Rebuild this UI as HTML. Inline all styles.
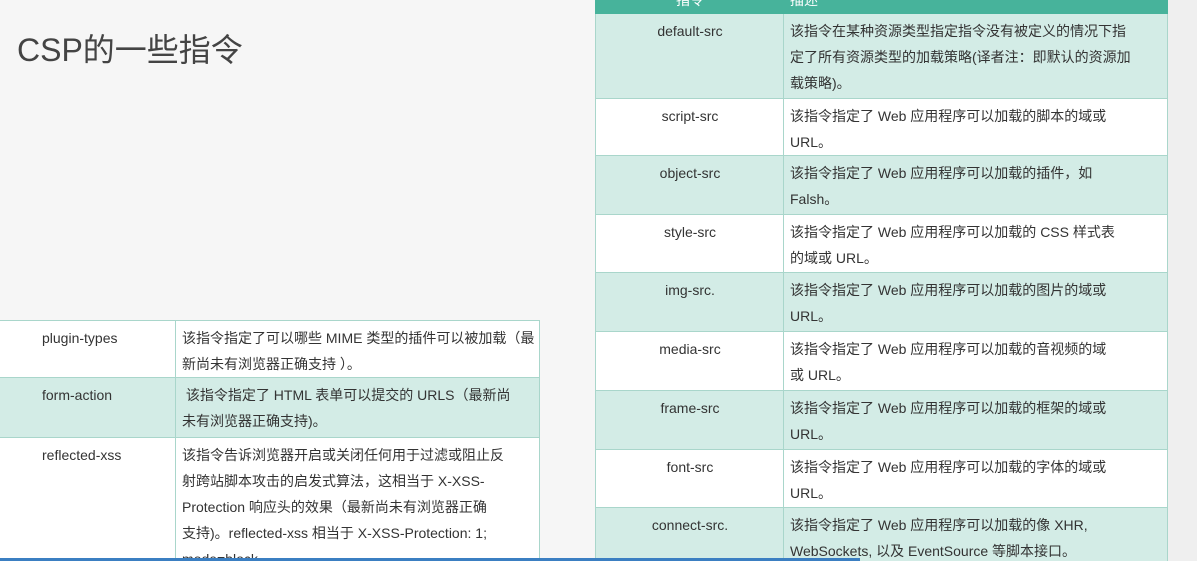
<!DOCTYPE html>
<html><head><meta charset="utf-8"><style>
*{margin:0;padding:0;box-sizing:border-box}
html,body{width:1197px;height:561px;overflow:hidden}
body{background:#f6f6f6;position:relative;font-family:"Liberation Sans","Noto Sans CJK SC",sans-serif;color:#333}
.title{position:absolute;left:17px;top:25px;font-size:32px;color:#444}
.row{position:absolute;border:1px solid #a9d6cb;border-top:none;font-size:14px;line-height:26px;overflow:hidden}
.t{background:#d3ece6}.w{background:#fff}
.row .k,.row .v{position:absolute;top:4px}
.row .dv{position:absolute;top:0;bottom:0;width:1px;background:#a9d6cb}
.R{left:595px;width:573px}
.R .k{left:0;width:188px;text-align:center}
.R .dv{left:187px}
.R .v{left:194px;width:372px}
.L{left:-2px;width:542px}
.L .k{left:43px}
.L .dv{left:176px}
.L .v{left:183px;width:355px}
.hd{position:absolute;left:595px;top:0;width:573px;height:14px;background:#47b39b;overflow:hidden;color:#fff;font-size:14px;line-height:14px}
.hd span{position:absolute;top:-7px}
.bar{position:absolute;left:0;top:558px;width:860px;height:3px;background:#3b7fc2}
.side{position:absolute;left:1168px;top:0;width:29px;height:561px;background:#efefef}
</style></head><body>
<div class="title">CSP的一些指令</div>
<div class="side"></div>
<div class="hd"><span style="left:81px">指令</span><span style="left:195px">描述</span></div>
<div class="row R t" style="top:14px;height:85px"><div class="dv"></div><div class="k">default-src</div><div class="v">该指令在某种资源类型指定指令没有被定义的情况下指<br>定了所有资源类型的加载策略(译者注：即默认的资源加<br>载策略)。</div></div>
<div class="row R w" style="top:99px;height:57px"><div class="dv"></div><div class="k">script-src</div><div class="v">该指令指定了 Web 应用程序可以加载的脚本的域或<br>URL。</div></div>
<div class="row R t" style="top:156px;height:59px"><div class="dv"></div><div class="k">object-src</div><div class="v">该指令指定了 Web 应用程序可以加载的插件，如<br>Falsh。</div></div>
<div class="row R w" style="top:215px;height:58px"><div class="dv"></div><div class="k">style-src</div><div class="v">该指令指定了 Web 应用程序可以加载的 CSS 样式表<br>的域或 URL。</div></div>
<div class="row R t" style="top:273px;height:59px"><div class="dv"></div><div class="k">img-src.</div><div class="v">该指令指定了 Web 应用程序可以加载的图片的域或<br>URL。</div></div>
<div class="row R w" style="top:332px;height:59px"><div class="dv"></div><div class="k">media-src</div><div class="v">该指令指定了 Web 应用程序可以加载的音视频的域<br>或 URL。</div></div>
<div class="row R t" style="top:391px;height:59px"><div class="dv"></div><div class="k">frame-src</div><div class="v">该指令指定了 Web 应用程序可以加载的框架的域或<br>URL。</div></div>
<div class="row R w" style="top:450px;height:58px"><div class="dv"></div><div class="k">font-src</div><div class="v">该指令指定了 Web 应用程序可以加载的字体的域或<br>URL。</div></div>
<div class="row R t" style="top:508px;height:60px"><div class="dv"></div><div class="k">connect-src.</div><div class="v">该指令指定了 Web 应用程序可以加载的像 XHR,<br>WebSockets, 以及 EventSource 等脚本接口。</div></div>

<div class="row L w" style="top:320px;height:58px;border-top:1px solid #a9d6cb"><div class="dv"></div><div class="k">plugin-types</div><div class="v">该指令指定了可以哪些 MIME 类型的插件可以被加载（最<br>新尚未有浏览器正确支持 ）。</div></div>
<div class="row L t" style="top:378px;height:60px"><div class="dv"></div><div class="k">form-action</div><div class="v">&nbsp;该指令指定了 HTML 表单可以提交的 URLS（最新尚<br>未有浏览器正确支持)。</div></div>
<div class="row L w" style="top:438px;height:140px"><div class="dv"></div><div class="k">reflected-xss</div><div class="v">该指令告诉浏览器开启或关闭任何用于过滤或阻止反<br>射跨站脚本攻击的启发式算法，这相当于 X-XSS-<br>Protection 响应头的效果（最新尚未有浏览器正确<br>支持)。reflected-xss 相当于 X-XSS-Protection: 1;<br>mode=block</div></div>
<div class="bar"></div>
</body></html>
